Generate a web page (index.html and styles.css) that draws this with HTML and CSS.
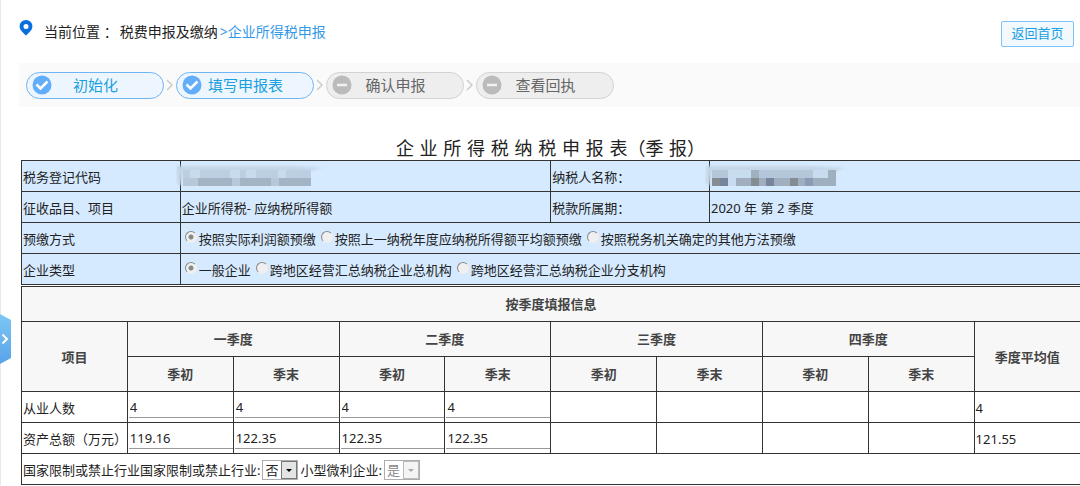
FILE: index.html
```html
<!DOCTYPE html>
<html lang="zh-CN">
<head>
    <meta charset="UTF-8">
    <meta name="viewport" content="width=device-width, initial-scale=1.0">
    <title>企业所得税申报</title>
    <link rel="stylesheet" href="styles.css">
</head>
<body>

<button class="side-toggle" type="button" aria-label="展开菜单">
    <svg width="11" height="50" viewBox="0 0 11 50">
        <defs>
            <linearGradient id="toggleFill" x1="0" y1="0" x2="0" y2="1">
                <stop offset="0" stop-color="#7cc8f4"/>
                <stop offset="1" stop-color="#5aa2ea"/>
            </linearGradient>
        </defs>
        <path d="M0 0L11 6V44L0 50Z" fill="url(#toggleFill)"/>
        <path d="M2.5 20.5L7 25L2.5 29.5" fill="none" stroke="#fff" stroke-width="2"/>
    </svg>
</button>

<div class="topbar">
    <div class="location">
        <svg class="pin" width="14" height="16" viewBox="0 0 14 16">
            <path d="M7 0A6.4 6.4 0 0 0 .6 6.4C.6 10.2 4.5 12.8 7 15.6C9.5 12.8 13.4 10.2 13.4 6.4A6.4 6.4 0 0 0 7 0Z" fill="#0a6fdc"/>
            <circle cx="7" cy="6.5" r="2.5" fill="#fff"/>
        </svg>
        <span>当前位置 ：</span>
        <span>税费申报及缴纳</span>
        <a href="#">&gt;企业所得税申报</a>
    </div>
    <button class="back" type="button">返回首页</button>
</div>

<div class="steps">
    <div class="step done">
        <svg width="20" height="20" viewBox="0 0 20 20"><circle cx="10" cy="10" r="9.5" fill="#62aefa"/><path d="M4.5 9.5L8.5 13.5L15.5 6.5" fill="none" stroke="#fff" stroke-width="2.5"/></svg>
        <span>初始化</span>
    </div>
    <svg class="arrow" width="8" height="12" viewBox="0 0 8 12"><path d="M1 1L6 6L1 11" fill="none" stroke="#ccc" stroke-width="1.5"/></svg>
    <div class="step done">
        <svg width="20" height="20" viewBox="0 0 20 20"><circle cx="10" cy="10" r="9.5" fill="#62aefa"/><path d="M4.5 9.5L8.5 13.5L15.5 6.5" fill="none" stroke="#fff" stroke-width="2.5"/></svg>
        <span>填写申报表</span>
    </div>
    <svg class="arrow" width="8" height="12" viewBox="0 0 8 12"><path d="M1 1L6 6L1 11" fill="none" stroke="#ccc" stroke-width="1.5"/></svg>
    <div class="step">
        <svg width="20" height="20" viewBox="0 0 20 20"><circle cx="10" cy="10" r="9.5" fill="#bbb"/><path d="M5 10H15" stroke="#f2f2f2" stroke-width="2.5"/></svg>
        <span>确认申报</span>
    </div>
    <svg class="arrow" width="8" height="12" viewBox="0 0 8 12"><path d="M1 1L6 6L1 11" fill="none" stroke="#ccc" stroke-width="1.5"/></svg>
    <div class="step">
        <svg width="20" height="20" viewBox="0 0 20 20"><circle cx="10" cy="10" r="9.5" fill="#bbb"/><path d="M5 10H15" stroke="#f2f2f2" stroke-width="2.5"/></svg>
        <span>查看回执</span>
    </div>
</div>

<div class="form">
    <h1>企 业 所 得 税 纳 税 申 报 表（季 报）</h1>

    <table class="info">
        <colgroup><col class="narrow"><col class="wide"><col class="narrow"><col class="wide"></colgroup>
        <tr>
            <td>税务登记代码</td>
            <td>
                <svg class="mask" width="160" height="28" viewBox="0 0 160 28">
                    <defs>
                        <filter id="haze"><feGaussianBlur stdDeviation="1.5"/></filter>
                    </defs>
                    <path d="M1 3H115L148 5L128 9H7L5 23L1 20Z" fill="#c3d5e6" filter="url(#haze)"/>
                    <path d="M7 7H135V15H7Z" fill="#bccfe2"/>
                    <path d="M7 15H135V23H7Z" fill="#a3b4c4"/>
                    <path d="M14 7H24V15H14ZM54 7H64V15H54ZM70 7H80V15H70ZM102 7H110V15H102Z" fill="#c8dbee"/>
                    <path d="M7 15H22V23H7ZM56 15H64V23H56ZM95 15H103V23H95Z" fill="#b6c8da"/>
                </svg>
            </td>
            <td>纳税人名称：</td>
            <td>
                <svg class="mask" width="160" height="28" viewBox="0 0 160 28">
                    <path d="M1 3H105L140 5L128 9H7L5 23L1 20Z" fill="#c3d5e6" filter="url(#haze)"/>
                    <path d="M7 7H131V15H7Z" fill="#b4c7da"/>
                    <path d="M7 15H131V23H7Z" fill="#a0afbf"/>
                    <path d="M7 15H15V23H7ZM46 15H54V23H46ZM85 15H93V23H85Z" fill="#858d93"/>
                    <path d="M15 15H23V23H15ZM61 15H69V23H61Z" fill="#77849a"/>
                    <path d="M46 7H54V15H46ZM123 7H131V15H123Z" fill="#9fb0bf"/>
                    <path d="M100 15H108V23H100Z" fill="#8a9cb5"/>
                    <path d="M23 7H46V15H23ZM23 15H31V23H23ZM108 7H123V15H108Z" fill="#c8dcef"/>
                </svg>
            </td>
        </tr>
        <tr>
            <td>征收品目、项目</td>
            <td>企业所得税- 应纳税所得额</td>
            <td>税款所属期：</td>
            <td>2020 年 第 2 季度</td>
        </tr>
        <tr>
            <td>预缴方式</td>
            <td colspan="3">
                <div class="options">
                    <label><input type="radio" name="method" checked>按照实际利润额预缴</label>
                    <label><input type="radio" name="method">按照上一纳税年度应纳税所得额平均额预缴</label>
                    <label><input type="radio" name="method">按照税务机关确定的其他方法预缴</label>
                </div>
            </td>
        </tr>
        <tr>
            <td>企业类型</td>
            <td colspan="3">
                <div class="options">
                    <label><input type="radio" name="kind" checked>一般企业</label>
                    <label><input type="radio" name="kind">跨地区经营汇总纳税企业总机构</label>
                    <label><input type="radio" name="kind">跨地区经营汇总纳税企业分支机构</label>
                </div>
            </td>
        </tr>
    </table>

    <table class="quarters">
        <thead>
            <tr><th colspan="10">按季度填报信息</th></tr>
            <tr>
                <th rowspan="2">项目</th>
                <th colspan="2">一季度</th>
                <th colspan="2">二季度</th>
                <th colspan="2">三季度</th>
                <th colspan="2">四季度</th>
                <th rowspan="2">季度平均值</th>
            </tr>
            <tr>
                <th>季初</th><th>季末</th>
                <th>季初</th><th>季末</th>
                <th>季初</th><th>季末</th>
                <th>季初</th><th>季末</th>
            </tr>
        </thead>
        <tbody>
            <tr>
                <td>从业人数</td>
                <td><input type="text" value="4" aria-label="一季度季初从业人数"></td>
                <td><input type="text" value="4" aria-label="一季度季末从业人数"></td>
                <td><input type="text" value="4" aria-label="二季度季初从业人数"></td>
                <td><input type="text" value="4" aria-label="二季度季末从业人数"></td>
                <td></td><td></td><td></td><td></td>
                <td>4</td>
            </tr>
            <tr>
                <td>资产总额（万元）</td>
                <td><input type="text" value="119.16" aria-label="一季度季初资产总额"></td>
                <td><input type="text" value="122.35" aria-label="一季度季末资产总额"></td>
                <td><input type="text" value="122.35" aria-label="二季度季初资产总额"></td>
                <td><input type="text" value="122.35" aria-label="二季度季末资产总额"></td>
                <td></td><td></td><td></td><td></td>
                <td>121.55</td>
            </tr>
            <tr>
                <td colspan="10">
                    <div class="selects">
                        <label for="limited">国家限制或禁止行业国家限制或禁止行业:</label>
                        <select id="limited"><option>否</option><option>是</option></select>
                        <label for="small">小型微利企业:</label>
                        <select id="small" disabled><option>是</option><option>否</option></select>
                    </div>
                </td>
            </tr>
        </tbody>
    </table>
</div>

</body>
</html>
```

FILE: styles.css
```css
* {
    box-sizing: border-box;
}
body {
    margin: 0;
    border-left: 1px solid #e8e8e8;
    font-family: "Noto Sans", "Noto Sans CJK SC", sans-serif;
    font-size: 13px;
    color: #222;
    background-color: white;
    overflow: hidden;
}
.side-toggle {
    position: absolute;
    left: 0;
    top: 314px;
    padding: 0;
    border: none;
    background: none;
    cursor: pointer;
}
.side-toggle svg {
    display: block;
}
.topbar {
    display: flex;
    justify-content: space-between;
    align-items: center;
    height: 63px;
    padding: 4px 6px 0 18px;
}
.location {
    display: flex;
    align-items: center;
    gap: 2px;
    margin-bottom: 6px;
    font-size: 14px;
}
.location a {
    color: #3399e6;
    text-decoration: none;
}
.pin {
    margin: 0 9px 6px 0;
}
.back {
    width: 73px;
    height: 26px;
    padding: 0 0 2px;
    border: 1px solid #7fc1f5;
    border-radius: 2px;
    background-color: #f1f8fe;
    color: #1a9fe0;
    font-family: inherit;
    font-size: 13px;
    cursor: pointer;
}
.steps {
    display: flex;
    align-items: center;
    gap: 2px;
    height: 44px;
    margin-left: 18px;
    padding-left: 7px;
    background-color: #fafafa;
}
.step {
    display: flex;
    align-items: center;
    width: 138px;
    height: 27px;
    padding: 0 24px 0 5px;
    border: 1px solid #d2d2d2;
    border-radius: 14px;
    background-color: #eee;
    color: #666;
    font-size: 15px;
}
.step span {
    flex: 1;
    padding-bottom: 2px;
    text-align: center;
}
.step.done {
    border-color: #6fb5f2;
    background-color: #edf6fe;
    color: #1a9fe0;
}
.form {
    margin-left: 20px;
}
h1 {
    margin: 0;
    padding: 29px 0 0;
    height: 53px;
    line-height: 26px;
    text-align: center;
    font-family: "DejaVu Sans", "Noto Sans CJK SC", sans-serif;
    font-size: 18px;
    font-weight: normal;
    color: #222;
}
table {
    width: 100%;
    border-collapse: collapse;
    table-layout: fixed;
}
td, th {
    height: 31px;
    padding: 1px 1px 0;
    border: 1px solid #333;
    text-align: left;
    line-height: 20px;
}
.info {
    background-color: #d6eaff;
    border-right: hidden;
}
.narrow {
    width: 15%;
}
.wide {
    width: 35%;
}
.mask {
    display: block;
    margin-left: -6px;
}
.options {
    display: flex;
    gap: 5px;
    padding-left: 3px;
}
.options label {
    display: flex;
    align-items: center;
    gap: 2px;
}
input[type="radio"] {
    appearance: none;
    width: 12px;
    height: 12px;
    margin: 0 0 4px;
    border: 1px solid;
    border-color: #888 #eee #eee #888;
    border-radius: 50%;
    background-color: #f0f0f0;
}
input[type="radio"]:checked {
    background-image: radial-gradient(circle, #888 0 2px, transparent 3px);
}
.quarters {
    margin-top: 1px;
    border-right: hidden;
}
.quarters th {
    height: 35px;
    padding-top: 0;
    background-color: #f7f7f7;
    text-align: center;
    font-weight: bold;
    color: #444;
}
input[type="text"] {
    display: block;
    width: calc(100% + 2px);
    height: 20px;
    padding: 0 0 0 1px;
    border: none;
    border-bottom: 1px solid #999;
    background: none;
    font-family: inherit;
    font-size: 13px;
    color: #222;
}
.selects {
    display: flex;
    align-items: center;
    gap: 2px;
}
select {
    appearance: none;
    width: 36px;
    height: 20px;
    padding: 0 0 0 2px;
    border: 1px solid #abadb3;
    border-radius: 0;
    background: url("data:image/svg+xml,%3Csvg xmlns='http://www.w3.org/2000/svg' width='16' height='18'%3E%3Crect x='.5' y='.5' width='15' height='17' fill='%23e4e4e4' stroke='%23777'/%3E%3Cpath d='M5 8h6l-3 3z'/%3E%3C/svg%3E") right center no-repeat white;
    font-family: inherit;
    font-size: 13px;
    color: #222;
}
select:disabled {
    background-image: url("data:image/svg+xml,%3Csvg xmlns='http://www.w3.org/2000/svg' width='16' height='18'%3E%3Crect x='.5' y='.5' width='15' height='17' fill='%23f4f4f4' stroke='%23bbb'/%3E%3Cpath d='M5 8h6l-3 3z' fill='%23aaa'/%3E%3C/svg%3E");
    color: #888;
    opacity: 1;
}
```
